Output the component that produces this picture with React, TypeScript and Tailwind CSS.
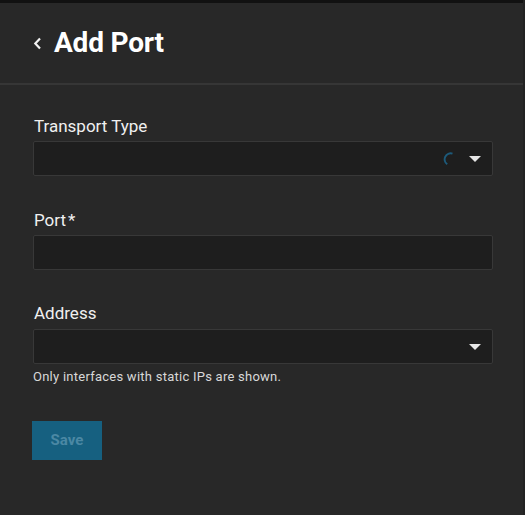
import React from "react";

function Arrow() {
  return (
    <svg width="12" height="6" viewBox="0 0 12 6" className="block">
      <path d="M0 0 L12 0 L6 6 Z" fill="#e6e6e6" />
    </svg>
  );
}

function Spinner() {
  return (
    <svg width="14" height="14" viewBox="0 0 14 14" className="block">
      <path d="M9.5 1.6 A6 6 0 0 0 4.2 12.2" fill="none" stroke="#1d5a7a" strokeWidth="2" />
    </svg>
  );
}

export default function App() {
  return (
    <div
      className="w-[525px] h-[515px] bg-[#282828] flex flex-col border-r-2 border-[#222222] overflow-hidden"
      style={{ fontFamily: "Roboto, 'Liberation Sans', sans-serif" }}
    >
      <div className="h-[3px] bg-[#111111] shrink-0" />
      <div className="h-[80px] shrink-0 flex items-center pl-[33px]">
        <svg width="9" height="13" viewBox="0 0 9 13" className="block mr-[12px] mt-[1px]">
          <path d="M7 1.5 L2.3 6.5 L7 11.5" fill="none" stroke="#f2f2f2" strokeWidth="2.2" />
        </svg>
        <h1 className="text-[28px] leading-none font-bold text-white tracking-[-0.2px]">Add Port</h1>
      </div>
      <div className="h-[2px] bg-[#363636] shrink-0" />
      <div className="pl-[33px] pt-[29px]">
        <div className="text-[17px] leading-[24px] text-[#f0f0f0] mb-[3px] ml-[1px]">Transport Type</div>
        <div className="w-[460px] h-[35px] bg-[#1e1e1e] border border-[#383838] rounded-[2px] flex items-center justify-end pr-[11px]">
          <div className="mr-[12px]">
            <Spinner />
          </div>
          <Arrow />
        </div>

        <div className="text-[17px] leading-[24px] text-[#f0f0f0] mb-[3px] mt-[32px] ml-[1px]">
          Port<span className="ml-[2px]">*</span>
        </div>
        <div className="w-[460px] h-[35px] bg-[#1e1e1e] border border-[#383838] rounded-[2px]" />

        <div className="text-[17px] leading-[24px] text-[#f0f0f0] mb-[4px] mt-[31px] ml-[1px]">Address</div>
        <div className="w-[460px] h-[35px] bg-[#1e1e1e] border border-[#383838] rounded-[2px] flex items-center justify-end pr-[11px]">
          <Arrow />
        </div>
        <div className="text-[13px] leading-[16px] text-[#d8d8d8] mt-[5px] tracking-[0.25px]">
          Only interfaces with static IPs are shown.
        </div>

        <button className="mt-[36px] -ml-[1px] w-[70px] h-[39px] bg-[#166080] text-[#4b88a4] font-bold text-[15px] flex items-center justify-center">
          Save
        </button>
      </div>
    </div>
  );
}
